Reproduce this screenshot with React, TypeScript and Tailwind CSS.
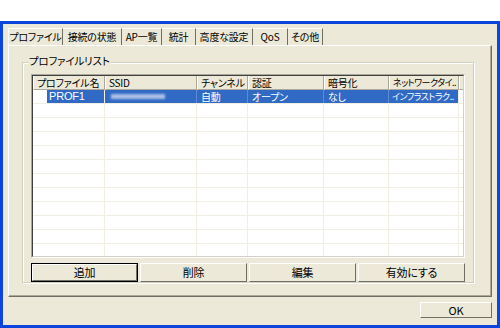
import React from 'react';

const tabs = ['プロファイル', '接続の状態', 'AP一覧', '統計', '高度な設定', 'QoS', 'その他'];
const tabWidths = [55, 59, 40, 34, 57, 35, 35];

const cols = [
  { label: 'プロファイル名', w: 72 },
  { label: 'SSID', w: 92 },
  { label: 'チャンネル', w: 51 },
  { label: '認証', w: 76 },
  { label: '暗号化', w: 65 },
  { label: 'ネットワークタイ..', w: 70 },
];

const font = { fontFamily: '"Noto Sans CJK JP", "Liberation Sans", sans-serif' };

function XpButton({ label, isDefault = false }: { label: string; isDefault?: boolean }) {
  return (
    <div className={`h-[19px] ${isDefault ? 'border border-black' : ''}`}>
      <div className="h-full border border-t-white border-l-white border-r-[#716F64] border-b-[#716F64] bg-[#ECE9D8] flex items-center justify-center text-[11px] text-black leading-none">
        {label}
      </div>
    </div>
  );
}

export default function App() {
  const emptyRows = Array.from({ length: 11 });
  return (
    <div className="w-[500px] h-[328px] bg-white flex flex-col overflow-hidden [font-feature-settings:'palt'] tracking-[-0.2px]" style={font}>
      <div className="h-[21px] shrink-0" />
      <div className="flex-1 border-t-[3px] border-x-[3px] border-b-[3px] border-[#0B45DC] bg-[#ECE9D8] px-[5px] pt-[4px] flex flex-col">
        {/* tabs */}
        <div className="flex h-[17px] text-[10px] leading-none text-black">
          {tabs.map((t, i) => (
            <div
              key={t}
              style={{ width: tabWidths[i] }}
              className={`flex items-center justify-center whitespace-nowrap border-t border-t-white border-r border-r-[#716F64] ${i === 0 ? 'border-l border-l-white bg-[#ECE9D8]' : ''}`}
            >
              {t}
            </div>
          ))}
        </div>
        {/* panel */}
        <div className="h-[252px] border border-t-white border-l-white border-r-[#716F64] border-b-[#716F64] shadow-[inset_-1px_-1px_0_#ACA899] pl-[13px] pr-[17px] pt-[9px]">
          <div className="relative h-[221px] mt-[7px] border border-[#D0D0BF] shadow-[inset_1px_1px_0_white,1px_1px_0_white] px-[8px] pt-[11px]">
            <div className="absolute left-[5px] top-[-7px] bg-[#ECE9D8] px-[1px] text-[10.5px] leading-none text-black">
              プロファイルリスト
            </div>
            {/* list view */}
            <div className="h-[184px] border border-t-[#ACA899] border-l-[#ACA899] border-r-white border-b-white">
              <div className="h-full border border-t-[#404040] border-l-[#404040] border-r-[#D4D0C8] border-b-[#D4D0C8] bg-white overflow-hidden">
                <div className="flex h-[14px] text-[10px] leading-none text-black">
                  {cols.map((c, i) => (
                    <div
                      key={c.label}
                      style={{ width: c.w }}
                      className={`shrink-0 bg-[#ECE9D8] border-l border-l-white border-r border-r-[#ACA899] border-b border-b-[#ACA899] flex items-center pl-[3px] whitespace-nowrap overflow-hidden ${i === 5 ? 'text-[9px] tracking-[-0.5px]' : ''}`}
                    >
                      {c.label}
                    </div>
                  ))}
                  <div className="w-[7px] shrink-0 bg-[#ECE9D8] border-l border-l-white border-r border-r-[#ACA899] border-b border-b-[#ACA899]" />
                </div>
                {/* selected row */}
                <div className="flex h-[14px] text-[10px] leading-none border-b border-[#F1EFE2]">
                  <div style={{ width: 72 }} className="shrink-0 flex pl-[14px] border-r border-[#F1EFE2]">
                    <div className="flex-1 bg-[#316AC5] text-white flex items-center pl-[2px] text-[11px]" style={{ fontFamily: '"Liberation Sans", sans-serif' }}>PROF1</div>
                  </div>
                  <div style={{ width: 92 }} className="shrink-0 bg-[#316AC5] border-r border-[#5C8AD6] flex items-center pl-[6px]">
                    <div className="w-[54px] h-[5px] bg-[#A9BFE6] blur-[1px]" />
                  </div>
                  <div style={{ width: 51 }} className="shrink-0 bg-[#316AC5] text-white border-r border-[#5C8AD6] flex items-center pl-[4px]">自動</div>
                  <div style={{ width: 76 }} className="shrink-0 bg-[#316AC5] text-white border-r border-[#5C8AD6] flex items-center pl-[4px]">オープン</div>
                  <div style={{ width: 65 }} className="shrink-0 bg-[#316AC5] text-white border-r border-[#5C8AD6] flex items-center pl-[4px]">なし</div>
                  <div style={{ width: 69 }} className="shrink-0 bg-[#316AC5] text-white flex items-center pl-[3px] whitespace-nowrap overflow-hidden text-[9px] tracking-[-0.5px]">インフラストラク..</div>
                  <div className="w-[8px] shrink-0 border-l border-[#F1EFE2]" />
                </div>
                {emptyRows.map((_, r) => (
                  <div key={r} className="flex h-[14px] border-b border-[#F1EFE2]">
                    {cols.map((c) => (
                      <div key={c.label} style={{ width: c.w }} className="shrink-0 border-r border-[#F1EFE2]" />
                    ))}
                  </div>
                ))}
              </div>
            </div>
            {/* buttons */}
            <div className="grid grid-cols-4 gap-[2px] mt-[5px]">
              <XpButton label="追加" isDefault />
              <XpButton label="削除" />
              <XpButton label="編集" />
              <XpButton label="有効にする" />
            </div>
          </div>
        </div>
        <div className="flex justify-end mt-[5px]">
          <div className="w-[72px] h-[16px] border border-t-white border-l-white border-r-[#716F64] border-b-[#716F64] flex items-center justify-center text-[11px] leading-none text-black">
            OK
          </div>
        </div>
      </div>
    </div>
  );
}
